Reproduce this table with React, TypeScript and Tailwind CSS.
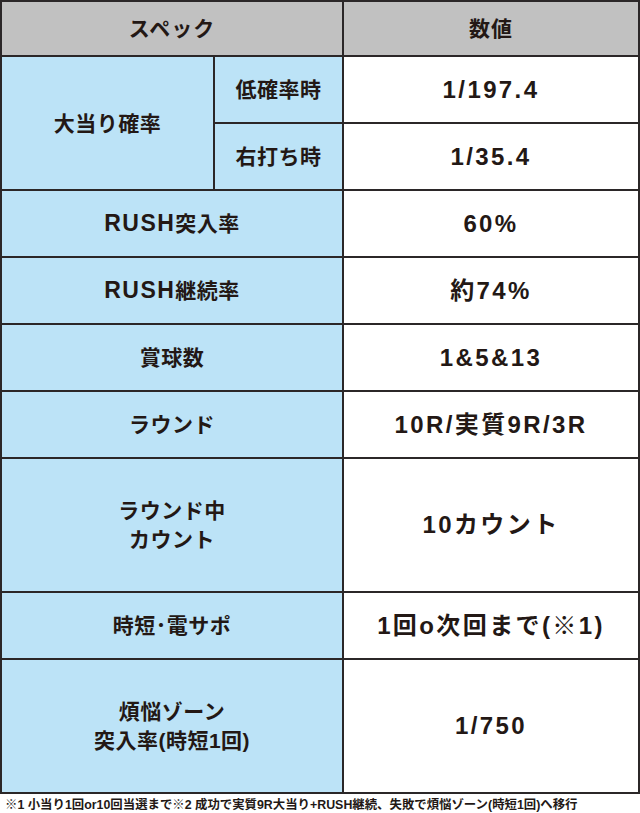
import React from 'react';

const font = "font-['Liberation_Sans','Noto_Sans_CJK_JP',sans-serif] font-bold text-[#231815]";

const headCell = 'bg-[#c1c1c1] flex items-center justify-center text-[21px] tracking-[1px]';
const labelCell = 'bg-[#bce3f7] flex items-center justify-center text-center text-[21px] tracking-[0.5px] leading-[29px]';
const valueCell = 'bg-white flex items-center justify-center text-center text-[24px] tracking-[2.4px]';

const rows: { label: React.ReactNode; value: string; tall?: boolean }[] = [
  { label: <><span className="text-[23px] tracking-[1.5px]">RUSH</span>突入率</>, value: '60%' },
  { label: <><span className="text-[23px] tracking-[1.5px]">RUSH</span>継続率</>, value: '約74%' },
  { label: '賞球数', value: '1&5&13' },
  { label: 'ラウンド', value: '10R/実質9R/3R' },
  { label: <>ラウンド中<br />カウント</>, value: '10カウント', tall: true },
  { label: '時短･電サポ', value: '1回o次回まで(※1)' },
  { label: <>煩悩ゾーン<br />突入率(時短1回)</>, value: '1/750', tall: true },
];

export default function App() {
  return (
    <div className={`w-[640px] bg-white ${font}`}>
      <div className="grid grid-cols-[211px_127px_1fr] gap-[2px] bg-[#2b2728] border-2 border-[#2b2728]">
        <div className={`${headCell} col-span-2 h-[53px]`}>スペック</div>
        <div className={`${headCell} h-[53px]`}>数値</div>

        <div className={`${labelCell} row-span-2`}>大当り確率</div>
        <div className={`${labelCell} h-[65px]`}>低確率時</div>
        <div className={valueCell}>1/197.4</div>
        <div className={`${labelCell} h-[65px]`}>右打ち時</div>
        <div className={valueCell}>1/35.4</div>

        {rows.map((r, i) => (
          <React.Fragment key={i}>
            <div className={`${labelCell} col-span-2 ${r.tall ? 'h-[132px]' : 'h-[65px]'}`}>{r.label}</div>
            <div className={valueCell}>{r.value}</div>
          </React.Fragment>
        ))}
      </div>
      <p className="px-[5px] pt-[3px] text-[12.4px] leading-[16px] whitespace-nowrap">
        ※1 小当り1回or10回当選まで※2 成功で実質9R大当り+RUSH継続、失敗で煩悩ゾーン(時短1回)へ移行
      </p>
    </div>
  );
}
